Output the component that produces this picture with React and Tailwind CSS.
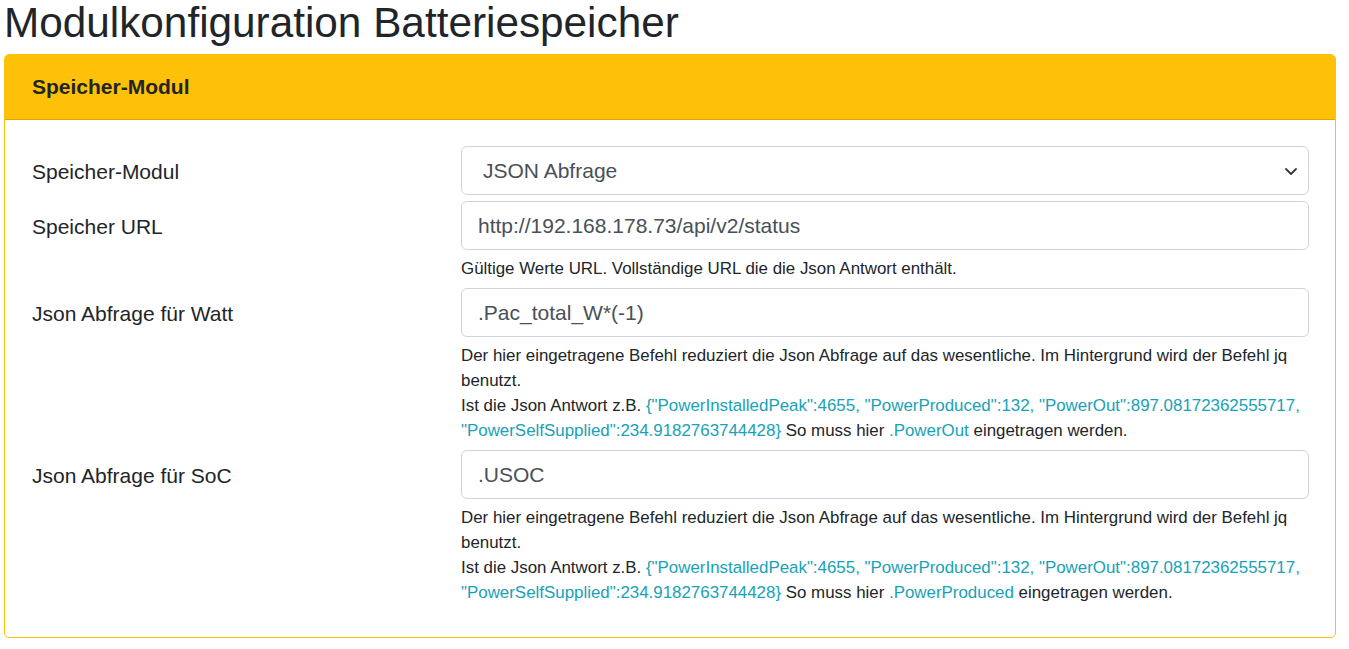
import React from "react";

const font = "font-['Liberation_Sans',Arial,sans-serif]";

function Field({ children }) {
  return (
    <div className={`h-[49px] border border-[#ced4da] rounded-[6px] px-[16px] flex items-center text-[21px] leading-[31.5px] text-[#495057] bg-white ${font}`}>
      {children}
    </div>
  );
}

function Help({ children }) {
  return <div className="mt-[6px] mb-[1px] text-[16.9px] leading-[25px] text-[#212529]">{children}</div>;
}

function Row({ label, children }) {
  return (
    <div className="grid grid-cols-[429px_848px] mb-[6px]">
      <div className="pt-[10px] text-[21px] leading-[31.5px]">{label}</div>
      <div>{children}</div>
    </div>
  );
}

const C = ({ children }) => <span className="text-[#17a2b8]">{children}</span>;

export default function App() {
  return (
    <div className={`${font} text-[#212529] bg-white min-h-[649px]`}>
      <h1 className="text-[42.3px] leading-[46px] mb-[8px] pl-[4px] font-normal">Modulkonfiguration Batteriespeicher</h1>
      <div className="ml-[4px] w-[1332px] border border-[#ffc107] rounded-[5px] overflow-hidden">
        <div className="bg-[#ffc107] border-b border-[rgba(0,0,0,0.125)] px-[27px] py-[16px] text-[21px] leading-[32px] font-bold">
          Speicher-Modul
        </div>
        <div className="pl-[27px] pr-[26px] pt-[26px] pb-[25px]">
          <Row label="Speicher-Modul">
            <div className={`h-[49px] border border-[#ced4da] rounded-[6px] pl-[21px] pr-[10px] flex items-center justify-between text-[21px] leading-[31.5px] text-[#495057] bg-white`}>
              <span>JSON Abfrage</span>
              <svg width="14" height="10" viewBox="0 0 14 10">
                <path d="M2 3 L7 8 L12 3" fill="none" stroke="#343a40" strokeWidth="1.8" strokeLinecap="round" strokeLinejoin="round" />
              </svg>
            </div>
          </Row>
          <Row label="Speicher URL">
            <Field>http://192.168.178.73/api/v2/status</Field>
            <Help>Gültige Werte URL. Vollständige URL die die Json Antwort enthält.</Help>
          </Row>
          <Row label="Json Abfrage für Watt">
            <Field>.Pac_total_W*(-1)</Field>
            <Help>
              Der hier eingetragene Befehl reduziert die Json Abfrage auf das wesentliche. Im Hintergrund wird der Befehl jq benutzt.
              <br />
              Ist die Json Antwort z.B.{" "}
              <C>{'{"PowerInstalledPeak":4655, "PowerProduced":132, "PowerOut":897.08172362555717, "PowerSelfSupplied":234.9182763744428}'}</C>{" "}
              So muss hier <C>.PowerOut</C> eingetragen werden.
            </Help>
          </Row>
          <Row label="Json Abfrage für SoC">
            <Field>.USOC</Field>
            <Help>
              Der hier eingetragene Befehl reduziert die Json Abfrage auf das wesentliche. Im Hintergrund wird der Befehl jq benutzt.
              <br />
              Ist die Json Antwort z.B.{" "}
              <C>{'{"PowerInstalledPeak":4655, "PowerProduced":132, "PowerOut":897.08172362555717, "PowerSelfSupplied":234.9182763744428}'}</C>{" "}
              So muss hier <C>.PowerProduced</C> eingetragen werden.
            </Help>
          </Row>
        </div>
      </div>
    </div>
  );
}
